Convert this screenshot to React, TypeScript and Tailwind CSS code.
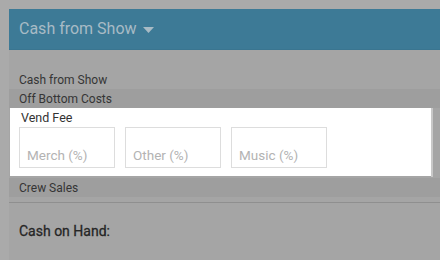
import * as React from 'react';

const fields = ['Merch (%)', 'Other (%)', 'Music (%)'];

const App: React.FC = () => {
  return (
    <div className="w-[440px] h-[260px] overflow-hidden bg-[#aaaaaa] pl-[9px] pt-[9px] font-['Roboto',sans-serif]">
      <div className="h-full bg-[#a5a5a5] flex flex-col">
        <div className="h-[41px] shrink-0 bg-[#3d7a96] border-b border-[#3a7590] flex items-center pl-[10px] text-[16px] text-[#a8bbc5]">
          Cash from Show
          <svg width="11" height="6" viewBox="0 0 11 6" className="ml-[6px] mt-[1px]">
            <path d="M0 0h11L5.5 6z" fill="#a8bbc5" />
          </svg>
        </div>

        <div className="h-[19px] mt-[20px] pl-[10px] flex items-center text-[12px] text-[#353535]">
          Cash from Show
        </div>
        <div className="h-[19px] bg-[#9e9e9e] pl-[10px] flex items-center text-[12px] text-[#353535]">
          Off Bottom Costs
        </div>

        <div className="flex">
          <div className="ml-px w-[421px] h-[68px] bg-white pl-[9px] pt-[2px]">
            <div className="text-[12.5px] text-[#333] pl-[2px] leading-[15px]">Vend Fee</div>
            <div className="flex gap-[10px] mt-[2px]">
              {fields.map((f) => (
                <div
                  key={f}
                  className="w-[96px] h-[41px] border border-[#dddddd] flex items-end pl-[7px] pb-[5px] text-[13.5px] text-[#b3b3b3] leading-none"
                >
                  {f}
                </div>
              ))}
            </div>
          </div>
          <div className="w-[2px] h-[69px] bg-[#c8c8c8]" />
        </div>

        <div className="h-[19px] mt-px bg-[#9e9e9e] pl-[10px] flex items-center text-[12px] text-[#353535]">
          Crew Sales
        </div>
        <div className="mt-[5px] h-px bg-[#8f8f8f]" />
        <div className="pl-[10px] pt-[20px] text-[14px] leading-[16px] text-[#262626] [-webkit-text-stroke:0.3px_#262626]">Cash on Hand:</div>
      </div>
    </div>
  );
};

export default App;
